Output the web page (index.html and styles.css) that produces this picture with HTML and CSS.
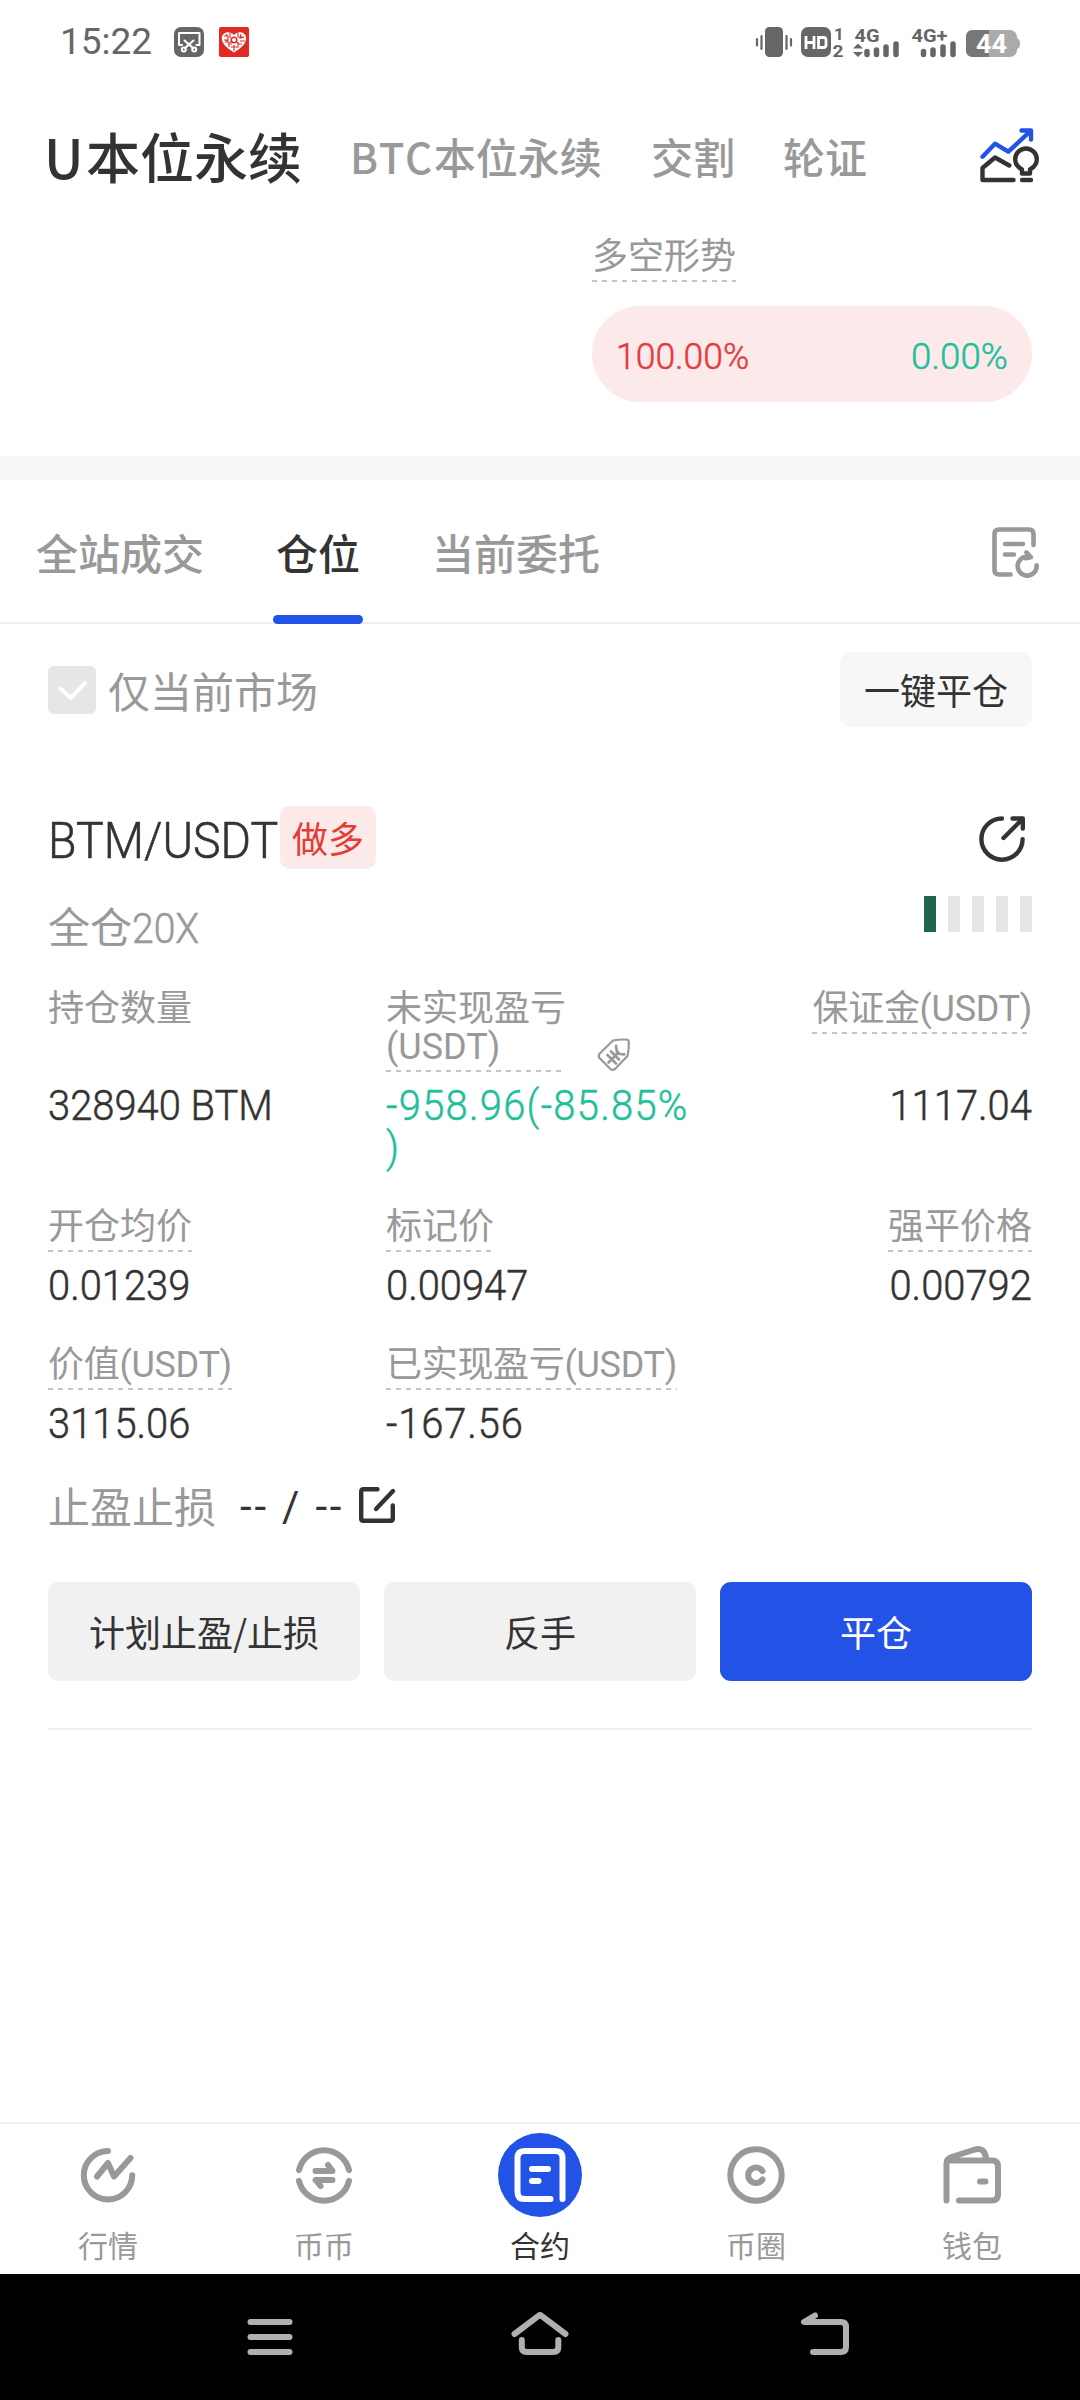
FILE: index.html
```html
<!DOCTYPE html>
<html lang="zh-CN">
<head>
<meta charset="utf-8">
<title>U本位永续</title>
<link rel="stylesheet" href="styles.css">
</head>
<body>
<div class="status">
  <span class="clock">15:22</span>
  <svg class="st-cut" width="30" height="30" viewBox="174 27 30 30" fill="none" stroke="#fff" stroke-width="2" stroke-linecap="round" stroke-linejoin="round">
    <rect x="174" y="27" width="30" height="30" rx="7" fill="#666" stroke="none"/>
    <path d="M182 45h-3V33h20.500v12h-3M184.500 40.500l8.500 7.500M193.500 40.500l-8.500 7.500"/>
    <circle cx="183.800" cy="49.500" r="2"/><circle cx="194.200" cy="49.500" r="2"/>
  </svg>
  <svg class="st-heart" width="30" height="30" viewBox="219 27 30 30">
    <rect x="219" y="27" width="30" height="30" rx="2" fill="#e02a23"/>
    <path d="M234 52.500C228 49 222 44 221.800 38.500C221.800 32 229.500 30 234 35C238.500 30 246.200 32 246.200 38.500C246 44 240 49 234 52.500Z" fill="#fff"/>
    <path d="M224 36h4v4h-4M230 33v5M226 34l2 3M225 42h4v5M228 44h4M238 33v4h5M241 34l-1 5M240 41h5M242 44h-4v4M234 45v6M231 47h6M225 40l3 1M244 37l-3 1M233 42h-3M237 42l2 2" stroke="#e02a23" stroke-width="1.100" fill="none"/>
    <circle cx="234" cy="40" r="2.800" fill="none" stroke="#e02a23" stroke-width="1.500"/>
  </svg>
  <svg class="st-right" width="266" height="34" viewBox="755 25 266 34" fill="#666">
    <rect x="765" y="27" width="18" height="30" rx="4.500"/>
    <path d="M757 39v6.500M761.500 36v13M786.500 36v13M791 39v6.500" stroke="#666" stroke-width="2.200" stroke-linecap="round"/>
    <rect x="801" y="27" width="30" height="30" rx="7"/>
    <path d="M806 36v13M814 36v13M806 42.500h8M818.500 37.500h5q2.500 0 2.500 2.500v5q0 2.500-2.500 2.500h-5z" stroke="#fff" stroke-width="2.800" fill="none"/>
    <text x="834" y="39.500" class="st-small">1</text>
    <text x="832.500" y="57" class="st-small" textLength="11" lengthAdjust="spacingAndGlyphs">2</text>
    <text x="854.500" y="41.500" class="st-net" textLength="25" lengthAdjust="spacingAndGlyphs">4G</text>
    <path d="M853 48.500l5-5 5 5zM853 52h10l-5 5z"/>
    <path d="M867 51.500v3M876.500 50v4.500M886 47v7.500M896 44v10.500M923.500 51.500v3M933 50v4.500M943 47v7.500M953 44v10.500" stroke="#666" stroke-width="5.500" stroke-linecap="round"/>
    <text x="911.500" y="41.500" class="st-net" textLength="36" lengthAdjust="spacingAndGlyphs">4G+</text>
    <rect x="966" y="30" width="51" height="27" rx="7" fill="#aaa"/>
    <path d="M1017 38q3 1 3 5.500t-3 5.500z" fill="#aaa"/>
    <path d="M989 30h-16q-7 0-7 7v13q0 7 7 7h16z" fill="#777"/>
    <text x="991.500" y="53" class="st-batt" text-anchor="middle" textLength="31" lengthAdjust="spacingAndGlyphs">44</text>
  </svg>
</div>

<header class="header">
  <span class="market market-on"><span class="wide-u">U</span>本位永续</span>
  <span class="market market-btc"><span class="wide-btc">BTC</span>本位永续</span>
  <span class="market">交割</span>
  <span class="market">轮证</span>
  <svg class="header-icon" width="60" height="56" viewBox="980 128 60 56" fill="none" stroke="#333" stroke-width="4.400" stroke-linecap="round" stroke-linejoin="round">
    <path d="M982.500 156.700L995 143.700l13.300 8L1030.500 131M1021.500 130.500h9.500v9" stroke="#2353e6"/>
    <path d="M1009.300 165.500L995 157.500l-12.500 10.500v12H1013.500M1022 180h9"/>
    <path d="M1022 173.500v-4q-6.800-3.700-6.800-10.200a10.800 10.800 0 0 1 21.600 0q0 6.500-6.800 10.200v4z"/>
  </svg>
</header>

<section class="sentiment">
  <div class="sentiment-box">
    <span class="label dashed">多空形势</span>
    <div class="ratio"><span class="up">100.00%</span><span class="down">0.00%</span></div>
  </div>
</section>

<nav class="tabs">
  <span class="tab">全站成交</span>
  <span class="tab tab-on">仓位</span>
  <span class="tab">当前委托</span>
  <svg class="tabs-icon" width="50" height="54" viewBox="991 525 50 54" fill="none" stroke="#999" stroke-width="4.600" stroke-linecap="round" stroke-linejoin="round">
    <path d="M1033.500 545v-11q0-4.500-4.500-4.500h-30q-4.500 0-4.500 4.500v36q0 4.500 4.500 4.500h11.500M1005 544h18M1005 554.500h9"/>
    <path d="M1036.600 565.200a9.500 9.500 0 1 1-6.200-8M1026.500 552.500l4.300 4.700-5 1"/>
  </svg>
</nav>

<main class="main">
  <div class="filter">
    <svg class="check" width="48" height="48" viewBox="0 0 48 48"><rect width="48" height="48" rx="6" fill="#e6e6e6"/><path d="M12.500 22.500l10 9.500L37 17" fill="none" stroke="#fff" stroke-width="4" stroke-linecap="round" stroke-linejoin="round"/></svg>
    <span class="filter-text">仅当前市场</span>
    <span class="close-all">一键平仓</span>
  </div>

  <article class="position">
    <div class="title-row">
      <span class="pair">BTM/USDT</span><span class="side">做多</span>
      <svg class="share" width="50" height="50" viewBox="977 814 50 50" fill="none" stroke="#333" stroke-width="4.400" stroke-linecap="round" stroke-linejoin="round">
        <path d="M1002 818.500a20.600 20.600 0 1 0 20.600 20.600M1003.500 838L1022 819.500M1012.500 818.500h10.300v10"/>
      </svg>
    </div>
    <div class="sub-row">
      <span class="lever">全仓<span class="times">20X</span></span>
      <div class="risk"><i class="risk-on"></i><i></i><i></i><i></i><i></i></div>
    </div>

    <div class="stats">
      <div class="cell"><span class="label">持仓数量</span></div>
      <div class="cell cell-pnl">
        <span class="label dashed pnl-label">未实现盈亏(USDT)</span>
        <svg class="tag" width="34" height="34" viewBox="597 1037 34 34" fill="none" stroke="#999" stroke-width="2.200" stroke-linecap="round" stroke-linejoin="round">
          <path d="M613 1039.500q8-1.500 14-.8q1.700.3 1.800 2q.3 7-1.300 14.300L615 1068q-2.500 1.800-4.500 0L599.500 1057q-1.500-2 0-4.200z"/>
          <path d="M607.500 1054l8.500 8.500M611 1050.500l8 8M608.500 1061.500l10-10M616 1044.800l1.200 7.700 7 .8" stroke-width="2.700"/>
        </svg>
      </div>
      <div class="cell right"><span class="label dashed label-unit">保证金(USDT)</span></div>
      <span class="value">328940 BTM</span>
      <span class="value v-pnl">-958.96(-85.85%)</span>
      <span class="value right">1117.04</span>

      <div class="cell next"><span class="label dashed">开仓均价</span></div>
      <div class="cell next"><span class="label dashed">标记价</span></div>
      <div class="cell next right"><span class="label dashed">强平价格</span></div>
      <span class="value">0.01239</span>
      <span class="value">0.00947</span>
      <span class="value right">0.00792</span>

      <div class="cell next"><span class="label dashed label-unit">价值(USDT)</span></div>
      <div class="cell next"><span class="label dashed label-unit">已实现盈亏(USDT)</span></div>
      <div class="cell next"></div>
      <span class="value">3115.06</span>
      <span class="value v-real">-167.56</span>
    </div>

    <div class="stop">
      <span class="stop-label">止盈止损</span>
      <span class="stop-value">-- / --</span>
      <svg width="40" height="40" viewBox="357 1484 40 40" fill="none" stroke="#333" stroke-width="4.400" stroke-linecap="round" stroke-linejoin="round">
        <path d="M377.500 1488.200h-14q-2.300 0-2.300 2.300v27q0 2.300 2.300 2.300h27q2.300 0 2.300-2.300V1504.500M376 1508L393 1490"/>
      </svg>
    </div>

    <div class="actions">
      <span class="btn">计划止盈/止损</span>
      <span class="btn">反手</span>
      <span class="btn btn-primary">平仓</span>
    </div>
    <div class="rule"></div>
  </article>
</main>

<nav class="tabbar">
  <div class="item">
    <svg width="84" height="84" viewBox="66 2133 84 84" fill="none" stroke="#999" stroke-width="6" stroke-linecap="round" stroke-linejoin="round"><path d="M108 2151a24.200 24.200 0 1 0 24.200 24.200M97 2176.500l11-13.500 6 13.500L130.500 2158"/></svg>
    <span>行情</span>
  </div>
  <div class="item">
    <svg width="84" height="84" viewBox="282 2133 84 84" fill="none" stroke="#999" stroke-width="6" stroke-linecap="round" stroke-linejoin="round"><path d="M299 2170a25.700 25.700 0 0 1 50 0M299 2181a25.700 25.700 0 0 0 50 0M315.500 2171h17l-4.500-6M332.500 2180h-17M316 2180l4.500 6"/></svg>
    <span>币币</span>
  </div>
  <div class="item item-on">
    <svg width="84" height="84" viewBox="498 2133 84 84" fill="none" stroke="#fff" stroke-width="6" stroke-linecap="round" stroke-linejoin="round"><circle cx="540" cy="2175" r="42" fill="#2353e6" stroke="none"/><path d="M562.500 2199v-41q0-7-7-7h-31q-7 0-7 7v34q0 7 7 7H550.500M532 2169h16M532 2181h6.500"/></svg>
    <span>合约</span>
  </div>
  <div class="item">
    <svg width="84" height="84" viewBox="714 2133 84 84" fill="none" stroke="#999" stroke-width="6" stroke-linecap="round"><circle cx="756" cy="2175" r="25.700"/><path d="M762.500 2171a7.800 7.800 0 1 0 0 8.500"/></svg>
    <span>币圈</span>
  </div>
  <div class="item">
    <svg width="84" height="84" viewBox="930 2133 84 84" fill="none" stroke="#999" stroke-width="6" stroke-linecap="round" stroke-linejoin="round"><path d="M946.500 2200.500v-37q0-5 5-6.500L975 2149.500q9-2.500 11 8M951 2160.500H992q6 0 6 6v28q0 6-6 6H959M980 2181.500h5.500"/></svg>
    <span>钱包</span>
  </div>
</nav>

<div class="sysbar">
  <svg width="96" height="60" viewBox="222 2307 96 60"><path d="M250.500 2322h39M250.500 2337h39M250.500 2352h39"/></svg>
  <svg width="96" height="60" viewBox="492 2307 96 60"><path d="M514.500 2334L538.500 2315.800q1.500-1.200 3 0L565.500 2334M521.800 2340v7q0 5 5 5h26.500q5 0 5-5v-7"/></svg>
  <svg width="96" height="60" viewBox="762 2307 96 60"><path d="M815 2315.500l-11 6.500h37q5 0 5 5v20q0 5-5 5H813"/></svg>
</div>
</body>
</html>
```
FILE: styles.css
```css
* { box-sizing: border-box; }
body {
  margin: 0;
  width: 1080px;
  height: 2400px;
  display: flex;
  flex-direction: column;
  background: #fff;
  color: #333;
  font-family: "Noto Sans CJK SC", sans-serif;
  overflow: hidden;
}
svg { display: block; flex: none; overflow: visible; }
span { white-space: nowrap; }

.status { height: 84px; display: flex; align-items: center; padding: 0 59px 0 60px; color: #666; flex: none; }
.clock { width: 114px; font: 37px/84px Roboto, sans-serif; }
.st-heart { margin-left: 15px; }
.st-right { margin-left: auto; }
.st-small { font: 700 17px Roboto, sans-serif; }
.st-net { font: 700 19px Roboto, sans-serif; }
.st-batt { font: 700 25px Roboto, sans-serif; fill: #fff; }

.header { height: 144px; flex: none; display: flex; align-items: center; gap: 48px; padding: 0 40px 0 44px; }
.market { font-size: 42px; font-weight: 500; line-height: 84px; color: #999; }
.market-on { font-size: 54px; color: #333; width: 258px; }
.market-btc { width: 253px; }
.wide-u { letter-spacing: 2.500px; }
.wide-btc { letter-spacing: 1.800px; }
.header-icon { margin-left: auto; }

.sentiment { height: 228px; flex: none; padding: 10px 48px 0; }
.sentiment-box { width: 440px; margin-left: auto; display: flex; flex-direction: column; align-items: flex-start; gap: 23px; }
.label { font: 36px/38px Roboto, "Noto Sans CJK SC", sans-serif; color: #999; padding-bottom: 6px; margin-bottom: 1px; display: block; }
.label-unit { letter-spacing: -.3px; }
.dashed { background: repeating-linear-gradient(90deg, #c4c4c4 0 5px, transparent 5px 10px) left bottom / 100% 2px no-repeat; }
.ratio { align-self: stretch; height: 96px; border-radius: 48px; background: #fce9ea; display: flex; justify-content: space-between; align-items: center; padding: 6px 24px 0; font: 350 37px/40px Roboto, sans-serif; -webkit-text-stroke: .5px currentColor; }
.up { color: #e23b3f; transform: scaleX(.96); transform-origin: left; }
.down { color: #1fbf9a; transform: scaleX(.99); transform-origin: right; }

.tabs { height: 168px; flex: none; border-top: 24px solid #f7f7f7; display: flex; gap: 72px; padding: 0 39px 0 36px; align-items: center; box-shadow: inset 0 -2px #eee; }
.tab { font-size: 42px; font-weight: 500; line-height: 144px; color: #999; }
.tab-on { color: #333; position: relative; }
.tab-on::after { content: ""; position: absolute; left: -3px; right: -3px; bottom: 0; height: 9px; border-radius: 5px; background: #2353e6; }
.tabs-icon { margin-left: auto; }

.main { flex: 1; }
.filter { height: 132px; display: flex; align-items: center; padding: 0 48px; }
.filter-text { font-size: 42px; line-height: 48px; color: #999; margin-left: 12px; }
.close-all { margin: 0 0 1px auto; width: 192px; height: 75px; border-radius: 11px; background: #f7f7f7; text-align: center; font-size: 36px; line-height: 75px; }

.position { padding: 50px 48px 0; }
.title-row { height: 63px; display: flex; align-items: flex-start; }
.pair { width: 232px; font: 350 50px/70px Roboto, sans-serif; transform: scaleX(.93); transform-origin: left; -webkit-text-stroke: .6px currentColor; }
.side { width: 96px; height: 63px; border-radius: 10px; background: #fce9ea; color: #e63a35; text-align: center; font-size: 36px; line-height: 63px; }
.share { margin: 8px 5px 0 auto; }
.sub-row { height: 121px; display: flex; justify-content: space-between; }
.lever { font: 42px/42px Roboto, "Noto Sans CJK SC", sans-serif; color: #999; margin-top: 39px; }
.times { display: inline-block; font-weight: 350; transform: scaleX(.93); transform-origin: left; -webkit-text-stroke: .5px currentColor; }
.risk { display: flex; gap: 12px; margin-top: 27px; }
.risk i { width: 12px; height: 36px; background: #e5e5e5; }
.risk .risk-on { background: #20654f; }

.stats { display: grid; grid-template-columns: 338px 338px 308px; row-gap: 12px; }
.cell { display: flex; align-items: flex-start; }
.cell-pnl { align-items: flex-end; gap: 29px; }
.tag { margin-bottom: 1px; }
.pnl-label { width: 182px; white-space: normal; background-size: 177px 2px; }
.right { justify-self: end; }
.next { margin-top: 27px; }
.value { font: 350 42px/42px Roboto, sans-serif; transform: scaleX(.95); transform-origin: left; -webkit-text-stroke: .5px currentColor; }
.value.right { transform-origin: right; }
.v-pnl { width: 328px; white-space: normal; line-break: anywhere; color: #1fbf9a; letter-spacing: 1.350px; }
.v-real { letter-spacing: .9px; }

.stop { margin-top: 39px; height: 42px; display: flex; align-items: center; }
.stop-label { font-size: 42px; line-height: 42px; color: #999; width: 192px; }
.stop-value { font: 42px/42px Roboto, sans-serif; width: 117px; letter-spacing: 2.800px; padding-top: 4px; }

.actions { margin-top: 56px; display: grid; grid-template-columns: repeat(3, 312px); gap: 24px; }
.btn { height: 99px; border-radius: 11px; background: #f1f1f1; text-align: center; font-size: 36px; line-height: 99px; }
.btn-primary { background: #2353e6; color: #fff; }
.rule { margin-top: 47px; height: 2px; background: #eee; }

.tabbar { height: 152px; flex: none; border-top: 2px solid #eee; display: grid; grid-template-columns: repeat(5, 216px); padding-top: 9px; }
.item { display: flex; flex-direction: column; align-items: center; gap: 12px; font-size: 30px; line-height: 30px; color: #999; }
.item-on { color: #333; }

.sysbar { height: 126px; flex: none; background: #000; display: flex; align-items: center; gap: 174px; padding-left: 222px; }
.sysbar path { fill: none; stroke: #b0b0b0; stroke-width: 6px; stroke-linecap: round; stroke-linejoin: round; }
```
